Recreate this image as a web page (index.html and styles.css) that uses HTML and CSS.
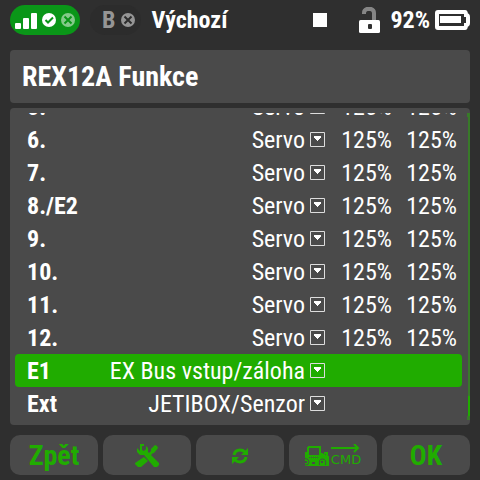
FILE: index.html
```html
<!DOCTYPE html>
<html lang="cs">
<head>
  <meta charset="UTF-8">
  <title>REX12A Funkce</title>
  <meta name="viewport" content="width=device-width, initial-scale=1.0">
  <link rel="stylesheet" href="styles.css">
</head>
<body>
  <svg class="defs" aria-hidden="true">
    <symbol id="drop" viewBox="0 0 15 15">
      <path d="M.5.5h14v14H.5z" fill="none" stroke="#ddd"/>
      <path d="M4 4h7v2h-1v1H9v1H8v1H7V8H6V7H5V6H4z" fill="#fff"/>
    </symbol>
  </svg>

  <header class="status">
    <div class="signal">
      <svg width="22" height="17" viewBox="0 0 22 17" fill="#fff" aria-hidden="true">
        <rect x="0" y="11" width="6" height="6" rx="1"/>
        <rect x="8" y="6" width="6" height="11" rx="1"/>
        <rect x="16" y="1" width="6" height="16" rx="1"/>
      </svg>
      <svg width="14" height="14" viewBox="0 0 14 14" aria-hidden="true">
        <circle cx="7" cy="7" r="7" fill="#fff"/>
        <path d="M3.5 7l2.5 2.5 5-5" fill="none" stroke="#0a9618" stroke-width="2"/>
      </svg>
      <svg width="14" height="14" viewBox="0 0 14 14" aria-hidden="true">
        <circle cx="7" cy="7" r="7" fill="#84ca8a"/>
        <path d="M3.5 3.5l7 7M10.5 3.5l-7 7" stroke="#0a9618" stroke-width="2"/>
      </svg>
    </div>
    <div class="backup">
      <span>B</span>
      <svg width="14" height="14" viewBox="0 0 14 14" aria-hidden="true">
        <circle cx="7" cy="7" r="7" fill="#959595"/>
        <path d="M3.5 3.5l7 7M10.5 3.5l-7 7" stroke="#2c2c2c" stroke-width="2"/>
      </svg>
    </div>
    <span class="model">Výchozí</span>
    <span class="stop"></span>
    <svg width="22" height="26" viewBox="0 0 22 26" aria-hidden="true">
      <path d="M5 7V6q0-3 3-4h4q3 1 3 4v7" fill="none" stroke="#858585" stroke-width="4"/>
      <rect x="0" y="13" width="21" height="13" rx="1.5" fill="#fff"/>
      <rect x="9" y="17" width="4" height="5" rx="1" fill="#2f2f2f"/>
    </svg>
    <span class="percent">92%</span>
    <svg width="35" height="20" viewBox="0 0 35 20" aria-hidden="true">
      <path d="M3 2h27q1 0 1 3 2 0 2 2v6q0 2-2 2 0 3-1 3H3q-1 0-1-1V3q0-1 1-1z" fill="none" stroke="#fff" stroke-width="4"/>
      <rect x="5" y="6" width="21" height="7" fill="#fff"/>
    </svg>
  </header>

  <h1 class="title">REX12A Funkce</h1>

  <main class="panel">
    <div class="view">
      <table class="list">
        <tbody id="rows"></tbody>
      </table>
    </div>
    <div class="scroll"><div class="thumb"></div></div>
  </main>

  <footer class="keys">
    <button type="button">Zpět</button>
    <button type="button" aria-label="Nástroje">
      <svg width="24" height="26" viewBox="0 0 24 26" fill="#20ac00" aria-hidden="true">
        <path d="M5 2h4v2H7v4l2 1 2-2V4l2 2v4l11 11v2l-2 2h-3L9 13H5L2 10V6l3 3z"/>
        <path d="M22 4l-2-1-4 4v2l-4 4 2 2 4-4h1l4-5z"/>
        <path d="M9 15l4 4-7 6H3l-3-3v-1z"/>
      </svg>
    </button>
    <button type="button" aria-label="Obnovit">
      <svg width="16" height="18" viewBox="0 0 16 18" aria-hidden="true">
        <path d="M2 9q1-5 6-5 3 0 5 2M14 11q-1 5-6 5-3 0-5-2" fill="none" stroke="#20ac00" stroke-width="3"/>
        <path d="M16 2v7H9zM0 18v-7h7z" fill="#20ac00"/>
      </svg>
    </button>
    <button type="button">
      <svg width="24" height="21" viewBox="0 0 24 21" aria-hidden="true">
        <path d="M3 1h13v7h2v1h1V7h4v4h1v10H0v-3h2v-2H0V7h2V2h1zM4 3v7h10V3z" fill="#20ac00" fill-rule="evenodd"/>
        <path d="M4 12h1v1H4zM6 12h1v1H6zM8 12h1v1H8zM10 12h1v1h-1zM12 12h1v1h-1zM20 9h1v1h-1z" fill="#4a4a4a"/>
        <path d="M0 13.5q4 0 4 3.500t-4 3M14.500 20q-1-6 3-6t3 6" fill="none" stroke="#4a4a4a"/>
        <path d="M16 16h2v2h-2zM7 17h3v2H7z" fill="#4a4a4a"/>
      </svg>
      <span class="cmd">
        <svg width="29" height="9" viewBox="0 0 29 9" aria-hidden="true">
          <path d="M0 4h27M23 0l4 4-4 4" fill="none" stroke="#20ac00" stroke-width="2"/>
        </svg>
        <span>CMD</span>
      </span>
    </button>
    <button type="button">OK</button>
  </footer>

  <script src="script.js"></script>
</body>
</html>
```
FILE: styles.css
```css
* {
  box-sizing: border-box;
}
body {
  margin: 0;
  height: 100vh;
  padding: 0 10px 5px;
  display: flex;
  flex-direction: column;
  background: #2f2f2f;
  color: #fff;
  font-family: 'Roboto Condensed', 'Liberation Sans Narrow', Roboto, sans-serif;
  font-size: 24px;
}
.defs {
  position: absolute;
  width: 0;
  height: 0;
}
.status {
  height: 40px;
  margin-bottom: 10px;
  display: flex;
  align-items: center;
  font-weight: 700;
}
.signal {
  display: flex;
  align-items: center;
  gap: 5px;
  height: 30px;
  padding: 0 5px;
  border-radius: 15px;
  background: #0a9618;
}
.backup {
  display: flex;
  align-items: center;
  gap: 6px;
  height: 30px;
  margin-left: 10px;
  padding: 0 6px 0 12px;
  border-radius: 15px;
  background: #2c2c2c;
  color: #959595;
}
.model {
  margin-left: 10px;
  flex: 1;
}
.stop {
  width: 14px;
  height: 14px;
  margin-right: 32px;
  background: #fff;
}
.percent {
  margin: 0 5px 0 9px;
}
.title {
  margin: 0 0 5px;
  height: 53px;
  padding: 0 12px;
  border-radius: 4px;
  background: #4a4a4a;
  font-size: 28px;
  line-height: 53px;
}
.panel {
  flex: 1;
  min-height: 0;
  display: flex;
  padding: 5px 0 5px 5px;
  border-radius: 4px;
  background: #4a4a4a;
}
.view {
  flex: 1;
  display: flex;
  align-items: flex-end;
  overflow: hidden;
}
.list {
  width: 100%;
  border-collapse: collapse;
}
.list tr {
  height: 33px;
}
.list th,
.list td {
  padding: 2px 0 0;
  line-height: 31px;
  white-space: nowrap;
}
.list th {
  padding-left: 12px;
  text-align: left;
  border-radius: 4px 0 0 4px;
}
.list td:last-child {
  width: 70px;
  padding-right: 5px;
  border-radius: 0 4px 4px 0;
}
.list .mode {
  padding: 0;
}
.value {
  width: 67px;
  text-align: right;
}
.active th,
.active td {
  background: #20ac00;
}
.pick {
  display: flex;
  justify-content: flex-end;
  align-items: center;
  gap: 5px;
}
.pick select {
  appearance: none;
  height: 33px;
  padding: 2px 0 0;
  border: 0;
  background: none;
  color: inherit;
  font: inherit;
  text-align: right;
}
.pick svg {
  width: 15px;
  height: 15px;
}
.scroll {
  display: flex;
  flex-direction: column;
  justify-content: flex-end;
  align-items: flex-end;
  width: 8px;
  padding-bottom: 4px;
  background:
    linear-gradient(#387a29, #387a29) right top / 3px 4px no-repeat,
    linear-gradient(#387a29, #387a29) right bottom / 3px 4px no-repeat,
    linear-gradient(#387a29, #387a29) right / 2px 100% no-repeat;
}
.thumb {
  width: 2px;
  height: 20px;
  background: #20ac00;
}
.keys {
  display: flex;
  gap: 5px;
  margin-top: 10px;
}
.keys button {
  flex: 1 1 0;
  min-width: 0;
  height: 40px;
  padding: 0;
  display: flex;
  justify-content: center;
  align-items: center;
  gap: 2px;
  border: 0;
  border-radius: 10px;
  background: #4a4a4a;
  color: #20ac00;
  font: inherit;
  font-size: 28px;
  font-weight: 700;
}
.cmd {
  display: flex;
  flex-direction: column;
  font: 13px/13px 'DejaVu Sans', sans-serif;
}
```
FILE: script.js
```js
const rows = [
  ['5.', 'Servo', 125, 125],
  ['6.', 'Servo', 125, 125],
  ['7.', 'Servo', 125, 125],
  ['8./E2', 'Servo', 125, 125],
  ['9.', 'Servo', 125, 125],
  ['10.', 'Servo', 125, 125],
  ['11.', 'Servo', 125, 125],
  ['12.', 'Servo', 125, 125],
  ['E1', 'EX Bus vstup/záloha'],
  ['Ext', 'JETIBOX/Senzor']
];

document.getElementById('rows').innerHTML = rows.map(([name, mode, min, max], i) => `
  <tr class="${name === 'E1' ? 'active' : ''}">
    <th scope="row"><label for="mode${i}">${name}</label></th>
    <td class="mode"><div class="pick">
      <select id="mode${i}"><option>${mode}</option></select>
      <svg aria-hidden="true"><use href="#drop"/></svg>
    </div></td>
    <td class="value">${min ? min + '%' : ''}</td>
    <td class="value">${max ? max + '%' : ''}</td>
  </tr>`).join('');
```
